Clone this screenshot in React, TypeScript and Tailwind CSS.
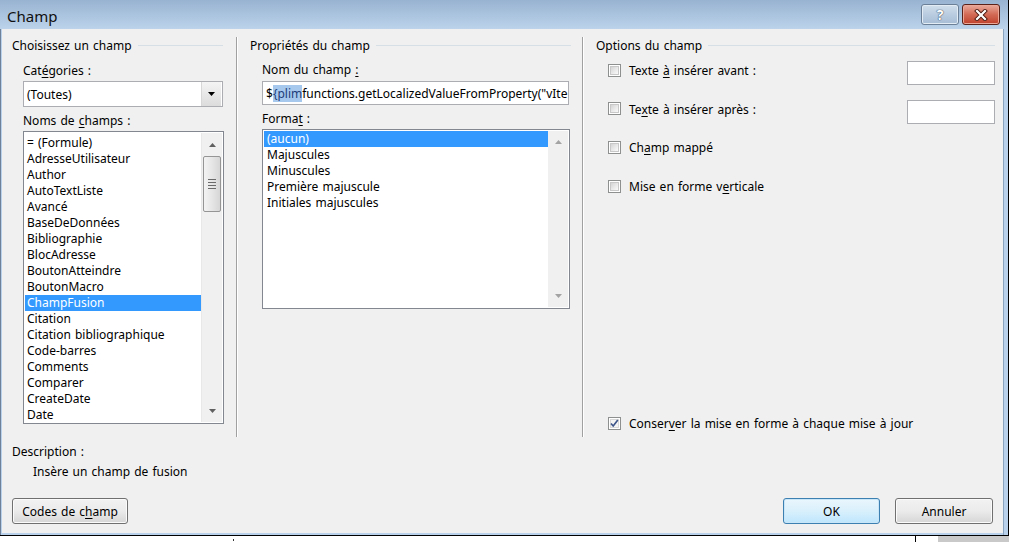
import React from "react";

const U = ({ children }: { children: React.ReactNode }) => (
  <span className="underline decoration-1 underline-offset-[2px]">{children}</span>
);

const T = ({ children, className = "" }: { children: React.ReactNode; className?: string }) => (
  <span className={"relative top-[1px] whitespace-nowrap " + className}>{children}</span>
);

function Arrow({ up, color = "#606060" }: { up?: boolean; color?: string }) {
  return (
    <svg width="7" height="4" viewBox="0 0 7 4" className="block">
      {up ? <path d="M0 4 L3.5 0 L7 4 Z" fill={color} /> : <path d="M0 0 L7 0 L3.5 4 Z" fill={color} />}
    </svg>
  );
}

function Checkbox({ checked }: { checked?: boolean }) {
  return (
    <div className="w-[13px] h-[13px] border border-[#8e8f8f] bg-white p-[1px] shrink-0">
      <div
        className={
          "w-full h-full relative " +
          (checked
            ? "bg-[#f4f4f4] border border-[#d8d8d8]"
            : "bg-gradient-to-br from-[#d4d4d4] via-[#e8e8e8] to-[#fafafa] border border-[#c8c8c8]")
        }
      >
        {checked && (
          <svg width="11" height="11" viewBox="0 0 11 11" className="absolute left-[-2px] top-[-2px]">
            <path d="M2 5.5 L4.2 8 L8.8 2" fill="none" stroke="#3e568a" strokeWidth="1.7" />
          </svg>
        )}
      </div>
    </div>
  );
}

function GroupHeader({ title, pl, pr }: { title: string; pl: string; pr: string }) {
  return (
    <div className={"flex items-center h-[16px] " + pl + " " + pr}>
      <T>{title}</T>
      <div className="flex-1 h-px bg-[#d5dfe5] ml-[6px]" />
    </div>
  );
}

function Button({ children, w, focused }: { children: React.ReactNode; w: string; focused?: boolean }) {
  return (
    <div
      className={
        "h-[26px] rounded-[3px] border flex items-center justify-center " +
        w +
        " " +
        (focused
          ? "border-[#3c7fb1] bg-gradient-to-b from-[#eaf6fd] via-[#d9f0fc] to-[#bee6fd] shadow-[inset_0_0_0_1px_#c9e6f8]"
          : "border-[#707070] bg-gradient-to-b from-[#f2f2f2] via-[#ebebeb] to-[#d6d6d6] shadow-[inset_0_0_0_1px_#fbfbfb]")
      }
    >
      <T>{children}</T>
    </div>
  );
}

const fieldNames = [
  "= (Formule)",
  "AdresseUtilisateur",
  "Author",
  "AutoTextListe",
  "Avancé",
  "BaseDeDonnées",
  "Bibliographie",
  "BlocAdresse",
  "BoutonAtteindre",
  "BoutonMacro",
  "ChampFusion",
  "Citation",
  "Citation bibliographique",
  "Code-barres",
  "Comments",
  "Comparer",
  "CreateDate",
  "Date",
];

const formats = ["(aucun)", "Majuscules", "Minuscules", "Première majuscule", "Initiales majuscules"];

export default function App() {
  return (
    <div className="w-[1011px] h-[542px] bg-white relative overflow-hidden font-['Noto_Sans',sans-serif] text-[12px] leading-[16px] [word-spacing:1px] text-black">
      {/* window */}
      <div className="w-[1009px] h-[536px] flex flex-col border-r border-b border-black">
        {/* title bar */}
        <div className="h-[29px] shrink-0 flex items-start bg-gradient-to-b from-[#98b3d1] to-[#bcd3eb] pl-[7px] pr-[8px]">
          <div className="text-[15px] leading-[20px] mt-[6px] text-[#101010]">Champ</div>
          <div className="flex-1" />
          <div className="mt-[4px] w-[38px] h-[21px] rounded-[3px] border border-[#6b7f97] bg-gradient-to-b from-[#d2dfec] via-[#b9cce0] to-[#a7bdd5] shadow-[inset_0_0_0_1px_#e3ecf5] flex items-center justify-center">
            <span className="text-white font-bold text-[14px] leading-[14px] [text-shadow:0_0_1px_#2a3a55,0_0_1px_#2a3a55]">?</span>
          </div>
          <div className="ml-[3px] mt-[4px] w-[38px] h-[21px] rounded-[3px] border border-[#5b2219] bg-gradient-to-b from-[#e9a99b] via-[#d26a55] to-[#c0412c] shadow-[inset_0_0_0_1px_#eba798] flex items-center justify-center">
            <svg width="14" height="12" viewBox="0 0 14 12">
              <path d="M3 2 L11 10 M11 2 L3 10" stroke="#4a1810" strokeWidth="4" strokeLinecap="square" />
              <path d="M3 2 L11 10 M11 2 L3 10" stroke="#ffffff" strokeWidth="2.2" strokeLinecap="square" />
            </svg>
          </div>
        </div>
        {/* body */}
        <div className="flex-1 flex">
          <div className="w-[2px] bg-[#b9d1ea] border-l border-[#6f8198]" />
          <div className="flex-1 bg-[#f0f0f0] flex flex-col">
            {/* columns */}
            <div className="h-[408px] flex">
              {/* left column */}
              <div className="w-[234px] pt-[8px] flex flex-col">
                <GroupHeader title="Choisissez un champ" pl="pl-[10px]" pr="pr-[13px]" />
                <div className="pl-[21px] mt-[9px] h-[16px]">
                  <T>
                    Cat<U>é</U>gories :
                  </T>
                </div>
                <div className="ml-[21px] mt-[3px] w-[200px] h-[26px] border border-[#abadb3] bg-white flex items-center">
                  <span className="pl-[3px] flex-1">
                    <T>(Toutes)</T>
                  </span>
                  <div className="w-[20px] h-[24px] mr-[1px] border-l border-[#d7d7d7] bg-gradient-to-b from-[#f4f4f4] to-[#dcdcdc] flex items-center justify-center">
                    <Arrow color="#000000" />
                  </div>
                </div>
                <div className="pl-[21px] mt-[5px] h-[16px]">
                  <T>
                    Noms de <U>c</U>hamps :
                  </T>
                </div>
                <div className="ml-[21px] mt-[3px] w-[201px] h-[293px] border border-[#828790] bg-white flex p-[1px]">
                  <div className="flex-1 pt-[2px] overflow-hidden">
                    {fieldNames.map((n) => (
                      <div
                        key={n}
                        className={"h-[16px] pl-[2px] whitespace-nowrap " + (n === "ChampFusion" ? "bg-[#3399ff] text-white" : "")}
                      >
                        {n}
                      </div>
                    ))}
                  </div>
                  <div className="w-[21px] bg-[#f0f0f0] border-l border-[#e8e8e8] flex flex-col items-center">
                    <div className="h-[23px] flex items-center justify-center">
                      <Arrow up />
                    </div>
                    <div className="w-[18px] h-[56px] rounded-[2px] border border-[#959595] bg-gradient-to-r from-[#f3f3f3] via-[#e6e6e6] to-[#d6d6d6] flex flex-col items-center justify-center gap-[2px]">
                      <div className="w-[8px] h-px bg-[#6a6a6a]" />
                      <div className="w-[8px] h-px bg-[#6a6a6a]" />
                      <div className="w-[8px] h-px bg-[#6a6a6a]" />
                      <div className="w-[8px] h-px bg-[#6a6a6a]" />
                    </div>
                    <div className="flex-1" />
                    <div className="h-[22px] flex items-center justify-center">
                      <Arrow />
                    </div>
                  </div>
                </div>
              </div>
              {/* separator */}
              <div className="w-[2px] mt-[8px] border-l border-[#a0a0a0] border-r border-r-white" />
              {/* middle column */}
              <div className="w-[344px] pt-[8px] flex flex-col">
                <GroupHeader title="Propriétés du champ" pl="pl-[12px]" pr="pr-[11px]" />
                <div className="pl-[24px] mt-[8px] h-[16px]">
                  <T>
                    Nom du champ <U>:</U>
                  </T>
                </div>
                <div className="ml-[24px] mt-[4px] w-[307px] h-[24px] border border-[#abadb3] bg-white flex items-center overflow-hidden whitespace-nowrap">
                  <T className="pl-[3px]">
                    $<span className="bg-[#a6c8ec] text-[#1d3e79]">{"{plim"}</span>
                    functions.getLocalizedValueFromProperty("vIte
                  </T>
                </div>
                <div className="pl-[24px] mt-[5px] h-[16px]">
                  <T>
                    Forma<U>t</U> :
                  </T>
                </div>
                <div className="ml-[24px] mt-[3px] w-[308px] h-[180px] border border-[#828790] bg-white flex p-[1px]">
                  <div className="flex-1 overflow-hidden">
                    {formats.map((n, i) => (
                      <div key={n} className={"h-[16px] pl-[3px] whitespace-nowrap " + (i === 0 ? "bg-[#3399ff] text-white" : "")}>
                        {n}
                      </div>
                    ))}
                  </div>
                  <div className="w-[20px] bg-[#f0f0f0] flex flex-col items-center">
                    <div className="h-[22px] flex items-center justify-center">
                      <Arrow up color="#a3a3a3" />
                    </div>
                    <div className="flex-1" />
                    <div className="h-[22px] flex items-center justify-center">
                      <Arrow color="#a3a3a3" />
                    </div>
                  </div>
                </div>
              </div>
              {/* separator */}
              <div className="w-[2px] mt-[8px] border-l border-[#a0a0a0] border-r border-r-white" />
              {/* right column */}
              <div className="flex-1 pt-[8px] flex flex-col">
                <GroupHeader title="Options du champ" pl="pl-[12px]" pr="pr-[8px]" />
                <div className="mt-[8px] pl-[24px] pr-[8px] flex flex-col gap-[15px]">
                  <div className="h-[24px] flex items-start">
                    <div className="mt-[3px]">
                      <Checkbox />
                    </div>
                    <span className="ml-[8px] mt-[1px]">
                      <T>
                        Texte <U>à</U> insérer avant :
                      </T>
                    </span>
                    <div className="flex-1" />
                    <div className="w-[88px] h-[24px] border border-[#abadb3] bg-white" />
                  </div>
                  <div className="h-[24px] flex items-start">
                    <div className="mt-[2px]">
                      <Checkbox />
                    </div>
                    <span className="ml-[8px] mt-[1px]">
                      <T>
                        Te<U>x</U>te à insérer après :
                      </T>
                    </span>
                    <div className="flex-1" />
                    <div className="w-[88px] h-[24px] border border-[#abadb3] bg-white" />
                  </div>
                  <div className="h-[24px] flex items-start">
                    <div className="mt-[2px]">
                      <Checkbox />
                    </div>
                    <span className="ml-[8px]">
                      <T>
                        Ch<U>a</U>mp mappé
                      </T>
                    </span>
                  </div>
                  <div className="h-[24px] flex items-start">
                    <div className="mt-[2px]">
                      <Checkbox />
                    </div>
                    <span className="ml-[8px]">
                      <T>
                        Mise en forme v<U>e</U>rticale
                      </T>
                    </span>
                  </div>
                </div>
                <div className="flex-1" />
                <div className="pl-[24px] mb-[6px] flex items-center">
                  <Checkbox checked />
                  <span className="ml-[8px]">
                    <T>
                      Conser<U>v</U>er la mise en forme à chaque mise à jour
                    </T>
                  </span>
                </div>
              </div>
            </div>
            {/* description */}
            <div className="pl-[10px] mt-[6px] h-[16px]">
              <T>Description :</T>
            </div>
            <div className="pl-[31px] mt-[4px] h-[16px]">
              <T>Insère un champ de fusion</T>
            </div>
            {/* buttons */}
            <div className="mt-[19px] flex pl-[10px] pr-[10px]">
              <Button w="w-[116px]">
                Codes de c<U>h</U>amp
              </Button>
              <div className="flex-1" />
              <Button w="w-[97px]" focused>
                OK
              </Button>
              <div className="w-[15px]" />
              <Button w="w-[98px]">Annuler</Button>
            </div>
            <div className="flex-1" />
            <div className="h-[2px] bg-[#b9d1ea]" />
          </div>
          <div className="w-[5px] bg-[#b9d1ea] border-l border-[#8aa3bf]" />
        </div>
      </div>
      {/* desktop bits visible below the dialog */}
      <div className="absolute left-[915px] top-[536px] w-px h-[6px] bg-black" />
      <div className="absolute left-[938px] top-[536px] w-[71px] h-[6px] bg-[#c9c9c9]" />
      <div className="absolute left-[233px] top-[539px] w-px h-[2px] bg-[#333]" />
    </div>
  );
}
